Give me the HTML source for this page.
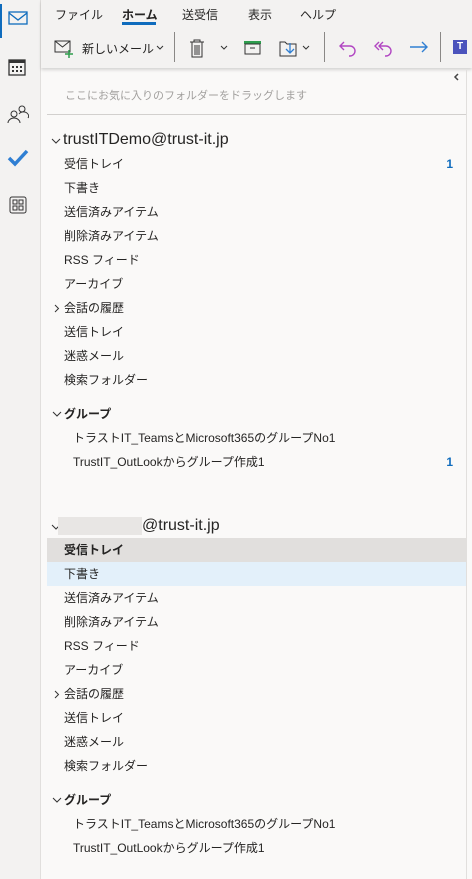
<!DOCTYPE html><html><head><meta charset="utf-8"><style>
body{margin:0;width:472px;height:879px;background:#faf9f8;font-family:"Liberation Sans","Noto Sans CJK JP",sans-serif;position:relative;overflow:hidden;color:#252423}
.rail{position:absolute;left:0;top:0;width:40px;height:879px;background:#f3f2f1;border-right:1px solid #e1dfdd}
.a{position:absolute;white-space:nowrap}
.t{font-size:12px}
.row{position:absolute;left:47px;width:419px;height:24px;font-size:12px;line-height:24px}
.cnt{position:absolute;right:13px;top:0;color:#0f6cbd;font-weight:bold}
</style></head><body>
<div class="rail">
<div class="a" style="left:0;top:4px;width:2px;height:34px;background:#0f6cbd"></div>
<svg class="a" style="left:8px;top:10px" width="20" height="16"><rect x="1" y="2" width="18" height="12" fill="none" stroke="#0f6cbd" stroke-width="1.3"/><path d="M1 3l9 7 9-7" fill="none" stroke="#0f6cbd" stroke-width="1.3"/></svg>
<svg class="a" style="left:8px;top:57px" width="20" height="20"><rect x="1" y="3" width="16" height="15" fill="none" stroke="#333" stroke-width="1.3"/><rect x="1" y="3" width="16" height="3" fill="#333"/><g fill="#333"><rect x="4" y="9" width="2" height="2"/><rect x="8" y="9" width="2" height="2"/><rect x="12" y="9" width="2" height="2"/><rect x="4" y="13" width="2" height="2"/><rect x="8" y="13" width="2" height="2"/><rect x="12" y="13" width="2" height="2"/></g></svg>
<svg class="a" style="left:7px;top:104px" width="22" height="20"><circle cx="7" cy="10" r="3" fill="none" stroke="#333"/><path d="M1 19a6 5 0 0 1 12 0" fill="none" stroke="#333"/><circle cx="15" cy="5" r="3" fill="none" stroke="#333"/><path d="M12 10a5 4 0 0 1 9 4" fill="none" stroke="#333"/></svg>
<svg class="a" style="left:7px;top:149px" width="22" height="18"><path d="M2 9l6 6L20 2" fill="none" stroke="#2f7fd3" stroke-width="3.5"/></svg>
<svg class="a" style="left:9px;top:196px" width="18" height="18"><rect x="1" y="1" width="16" height="16" rx="2" fill="none" stroke="#333"/><rect x="4" y="4" width="4" height="4" fill="none" stroke="#333"/><rect x="10" y="4" width="4" height="4" fill="none" stroke="#333"/><rect x="4" y="10" width="4" height="4" fill="none" stroke="#333"/><rect x="10" y="10" width="4" height="4" fill="none" stroke="#333"/></svg>
</div>
<div class="a" style="left:41px;top:0;width:431px;height:68px;background:#f3f2f1;box-shadow:0 2px 3px rgba(0,0,0,.15)"></div>
<div class="a t" style="left:55px;top:6px">ファイル</div>
<div class="a t" style="left:122px;top:6px;font-weight:bold">ホーム</div>
<div class="a" style="left:122px;top:22px;width:34px;height:3px;background:#0f6cbd"></div>
<div class="a t" style="left:182px;top:6px">送受信</div>
<div class="a t" style="left:248px;top:6px">表示</div>
<div class="a t" style="left:300px;top:6px">ヘルプ</div>
<svg class="a" style="left:54px;top:40px" width="20" height="18"><rect x="1" y="1" width="15" height="11" fill="none" stroke="#333"/><path d="M1 1l7.5 6L16 1" fill="none" stroke="#333"/><path d="M15 10v8M11 14h8" stroke="#2e9e4e" stroke-width="1.5"/></svg>
<div class="a t" style="left:82px;top:40px">新しいメール</div>
<svg class="a" style="left:156px;top:45px" width="8" height="6"><path d="M1 1l3 3 3-3" fill="none" stroke="#333"/></svg>
<div class="a" style="left:174px;top:32px;width:1px;height:30px;background:#8a8886"></div>
<svg class="a" style="left:188px;top:38px" width="18" height="20"><path d="M2 4h14M6 4V2h6v2M4 4v15h10V4M7 7v10M9 7v10M11 7v10" fill="none" stroke="#333"/></svg>
<svg class="a" style="left:220px;top:45px" width="8" height="6"><path d="M1 1l3 3 3-3" fill="none" stroke="#333"/></svg>
<svg class="a" style="left:243px;top:40px" width="20" height="16"><rect x="1" y="1" width="17" height="3" fill="#2e9e4e"/><rect x="2" y="4" width="15" height="10" fill="none" stroke="#333"/><path d="M7 8h5" stroke="#333"/></svg>
<svg class="a" style="left:279px;top:38px" width="20" height="20"><path d="M1 4h5l2 2h9v12H1z" fill="none" stroke="#333"/><path d="M11 5v10M7 11l4 4 4-4" fill="none" stroke="#2f7fd3" stroke-width="1.3"/></svg>
<svg class="a" style="left:302px;top:45px" width="8" height="6"><path d="M1 1l3 3 3-3" fill="none" stroke="#333"/></svg>
<div class="a" style="left:324px;top:32px;width:1px;height:30px;background:#8a8886"></div>
<svg class="a" style="left:338px;top:38px" width="20" height="20"><path d="M6 4L2 8l4 4M2 8h10a5 5 0 0 1 0 10h-1" fill="none" stroke="#b146c2" stroke-width="1.4"/></svg>
<svg class="a" style="left:372px;top:38px" width="22" height="20"><path d="M7 4L3 8l4 4M11 4L7 8l4 4M7 8h7a5 5 0 0 1 0 10h-1" fill="none" stroke="#b146c2" stroke-width="1.4"/></svg>
<svg class="a" style="left:408px;top:38px" width="22" height="20"><path d="M2 9h17M14 4l5 5-5 5" fill="none" stroke="#2f7fd3" stroke-width="1.4"/></svg>
<div class="a" style="left:440px;top:32px;width:1px;height:30px;background:#8a8886"></div>
<div class="a" style="left:453px;top:40px;width:14px;height:14px;background:#4b53bc;color:#fff;font-size:10px;font-weight:bold;text-align:center;line-height:14px">T</div>
<svg class="a" style="left:453px;top:73px" width="6" height="8"><path d="M5 1L2 4l3 3" fill="none" stroke="#444" stroke-width="1.5"/></svg>
<div class="a" style="left:65px;top:87px;font-size:11px;color:#a19f9d">ここにお気に入りのフォルダーをドラッグします</div>
<div class="a" style="left:47px;top:114px;width:419px;height:1px;background:#d2d0ce"></div>
<div class="a" style="left:466px;top:70px;width:1px;height:809px;background:#e1dfdd"></div>
<svg class="a" style="left:51px;top:137px" width="10" height="8"><path d="M1 2l4 4 4-4" fill="none" stroke="#333"/></svg>
<div class="a" style="left:63px;top:131px;font-size:16px">trustITDemo@trust-it.jp</div>
<div class="row" style="top:152px"><span style="margin-left:17px">受信トレイ</span><span class="cnt">1</span></div>
<div class="row" style="top:176px"><span style="margin-left:17px">下書き</span></div>
<div class="row" style="top:200px"><span style="margin-left:17px">送信済みアイテム</span></div>
<div class="row" style="top:224px"><span style="margin-left:17px">削除済みアイテム</span></div>
<div class="row" style="top:248px"><span style="margin-left:17px">RSS フィード</span></div>
<div class="row" style="top:272px"><span style="margin-left:17px">アーカイブ</span></div>
<div class="row" style="top:296px"><svg style="position:absolute;left:7px;top:8px" width="6" height="9"><path d="M1 1l3.5 3.5L1 8" fill="none" stroke="#333"/></svg><span style="margin-left:17px">会話の履歴</span></div>
<div class="row" style="top:320px"><span style="margin-left:17px">送信トレイ</span></div>
<div class="row" style="top:344px"><span style="margin-left:17px">迷惑メール</span></div>
<div class="row" style="top:368px"><span style="margin-left:17px">検索フォルダー</span></div>
<div class="row" style="top:402px;font-weight:bold"><svg style="position:absolute;left:5px;top:9px" width="10" height="7"><path d="M1 1l4 4 4-4" fill="none" stroke="#333"/></svg><span style="margin-left:17px">グループ</span></div>
<div class="row" style="top:426px"><span style="margin-left:26px">トラストIT_TeamsとMicrosoft365のグループNo1</span></div>
<div class="row" style="top:450px"><span style="margin-left:26px">TrustIT_OutLookからグループ作成1</span><span class="cnt">1</span></div>
<svg class="a" style="left:51px;top:523px" width="10" height="8"><path d="M1 2l4 4 4-4" fill="none" stroke="#333"/></svg>
<div class="a" style="left:58px;top:517px;width:84px;height:18px;background:#e8e6e4"></div>
<div class="a" style="left:142px;top:517px;font-size:16px">@trust-it.jp</div>
<div class="row" style="top:538px;background:#e1dfdd;font-weight:bold"><span style="margin-left:17px">受信トレイ</span></div>
<div class="row" style="top:562px;background:#e3f0fa"><span style="margin-left:17px">下書き</span></div>
<div class="row" style="top:586px"><span style="margin-left:17px">送信済みアイテム</span></div>
<div class="row" style="top:610px"><span style="margin-left:17px">削除済みアイテム</span></div>
<div class="row" style="top:634px"><span style="margin-left:17px">RSS フィード</span></div>
<div class="row" style="top:658px"><span style="margin-left:17px">アーカイブ</span></div>
<div class="row" style="top:682px"><svg style="position:absolute;left:7px;top:8px" width="6" height="9"><path d="M1 1l3.5 3.5L1 8" fill="none" stroke="#333"/></svg><span style="margin-left:17px">会話の履歴</span></div>
<div class="row" style="top:706px"><span style="margin-left:17px">送信トレイ</span></div>
<div class="row" style="top:730px"><span style="margin-left:17px">迷惑メール</span></div>
<div class="row" style="top:754px"><span style="margin-left:17px">検索フォルダー</span></div>
<div class="row" style="top:788px;font-weight:bold"><svg style="position:absolute;left:5px;top:9px" width="10" height="7"><path d="M1 1l4 4 4-4" fill="none" stroke="#333"/></svg><span style="margin-left:17px">グループ</span></div>
<div class="row" style="top:812px"><span style="margin-left:26px">トラストIT_TeamsとMicrosoft365のグループNo1</span></div>
<div class="row" style="top:836px"><span style="margin-left:26px">TrustIT_OutLookからグループ作成1</span></div>
</body></html>
